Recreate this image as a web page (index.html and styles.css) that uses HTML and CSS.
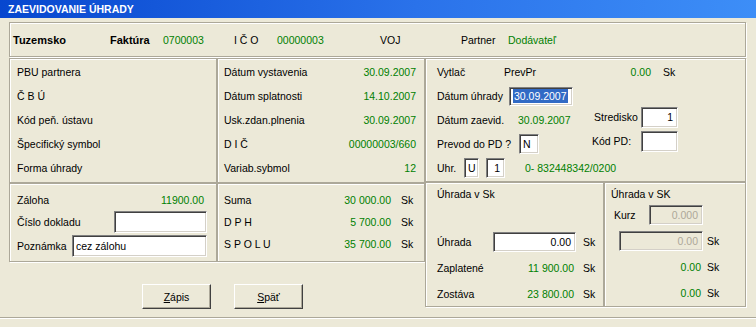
FILE: index.html
```html
<!DOCTYPE html>
<html lang="sk">
<head>
  <meta charset="UTF-8" />
  <title>Zaevidovanie úhrady</title>
  <link rel="stylesheet" href="styles.css">
</head>
<body>
<div class="window">
  <div class="titlebar">ZAEVIDOVANIE ÚHRADY</div>

  <div class="content">
    <div class="panel head">
      <span class="b">Tuzemsko</span>
      <span class="b">Faktúra</span>
      <span class="g">0700003</span>
      <span>I Č O</span>
      <span class="g">00000003</span>
      <span>VOJ</span>
      <span>Partner</span>
      <span class="g">Dodávateľ</span>
    </div>

    <div class="main">
      <div class="leftpart">
        <div class="upper">
          <div class="panel box list">
            <div class="f">PBU partnera</div>
            <div class="f">Č B Ú</div>
            <div class="f">Kód peň. ústavu</div>
            <div class="f">Špecifický symbol</div>
            <div class="f">Forma úhrady</div>
          </div>
          <div class="panel box list dates">
            <div class="f"><span>Dátum vystavenia</span><span class="g">30.09.2007</span></div>
            <div class="f"><span>Dátum splatnosti</span><span class="g">14.10.2007</span></div>
            <div class="f"><span>Usk.zdan.plnenia</span><span class="g">30.09.2007</span></div>
            <div class="f"><span>D I Č</span><span class="g">00000003/660</span></div>
            <div class="f"><span>Variab.sybmol</span><span class="g">12</span></div>
          </div>
        </div>

        <div class="lower">
          <div class="panel box zaloha">
            <div class="r"><span>Záloha</span><span class="g val">11900.00</span></div>
            <div class="r"><span>Číslo dokladu</span><span class="inp w93"></span></div>
            <div class="r r3"><span>Poznámka</span><span class="inp w135 left">cez zálohu</span></div>
          </div>
          <div class="panel box sums">
            <div class="s"><span>Suma</span><span class="g">30 000.00</span><span>Sk</span></div>
            <div class="s"><span>D P H</span><span class="g">5 700.00</span><span>Sk</span></div>
            <div class="s"><span>S P O L U</span><span class="g">35 700.00</span><span>Sk</span></div>
          </div>
        </div>

        <div class="buttons">
          <button class="btn"><u>Z</u>ápis</button>
          <button class="btn"><u>S</u>päť</button>
        </div>
      </div>

      <div class="rightpart">
        <div class="panel vyt">
          <div class="vrow">
            <span class="c67">Vytlač</span>
            <span class="c117">PrevPr</span>
            <span class="g c30">0.00</span>
            <span class="sk12">Sk</span>
          </div>
          <div class="cols">
            <div class="lc">
              <div class="lr">
                <span class="c72">Dátum úhrady</span>
                <span class="inp w64 left"><span class="sel">30.09.2007</span></span>
              </div>
              <div class="lr">
                <span class="c81">Dátum zaevid.</span>
                <span class="g">30.09.2007</span>
              </div>
              <div class="lr">
                <span class="c82">Prevod do PD ?</span>
                <span class="inp w20 left">N</span>
              </div>
              <div class="lr">
                <span class="c27">Uhr.</span>
                <span class="inp w15 left">U</span>
                <span class="inp w19 ml7">1</span>
                <span class="g ml20">0- 832448342/0200</span>
              </div>
            </div>
            <div class="rc">
              <span class="pl2">Stredisko</span>
              <span class="inp w37 h21">1</span>
              <span>Kód PD:</span>
              <span class="inp w37 h21"></span>
            </div>
          </div>
        </div>

        <div class="uh">
          <div class="panel ubox">
            <div class="utitle">Úhrada v Sk</div>
            <div class="urow first">
              <span class="c56">Úhrada</span>
              <span class="inp w83">0.00</span>
              <span class="ml7">Sk</span>
            </div>
            <div class="urow">
              <span class="c56">Zaplatené</span>
              <span class="g c81 right">11 900.00</span>
              <span class="ml9">Sk</span>
            </div>
            <div class="urow">
              <span class="c56">Zostáva</span>
              <span class="g c81 right">23 800.00</span>
              <span class="ml9">Sk</span>
            </div>
          </div>
          <div class="panel cbox">
            <div class="utitle">Úhrada v SK</div>
            <div class="urow">
              <span class="kurz">Kurz</span>
              <span class="inp off w54">0.000</span>
            </div>
            <div class="urow mt7">
              <span class="inp off w84 ml8">0.00</span>
              <span class="ml4">Sk</span>
            </div>
            <div class="urow">
              <span class="g c90 right">0.00</span>
              <span class="ml6">Sk</span>
            </div>
            <div class="urow">
              <span class="g c90 right">0.00</span>
              <span class="ml6">Sk</span>
            </div>
          </div>
        </div>
      </div>
    </div>
  </div>

  <div class="bottom"></div>
</div>
</body>
</html>
```

FILE: styles.css
```css
* {
  box-sizing: border-box;
}
body {
  margin: 0;
  background-color: #ece9d8;
  font-family: "Liberation Sans", Arial, sans-serif;
  font-size: 10.5px;
  color: #000;
}

.window {
  width: 756px;
  height: 327px;
  overflow: hidden;
}

.titlebar {
  height: 18px;
  line-height: 18px;
  padding-left: 8px;
  color: #fff;
  font-weight: bold;
  background: linear-gradient(to right, #0747cf, #2a72ea 55%, #3d8ef7);
}

.content {
  padding: 4px 0 0 9px;
}

/* etched frame */
.panel {
  border: 1px solid #aca899;
  box-shadow: inset 1px 1px 0 #fff, 1px 1px 0 #fff;
}

.g {
  color: #008000;
}
.b {
  font-weight: bold;
  font-size: 11px;
}

.head {
  width: 737px;
  height: 35px;
  display: grid;
  grid-template-columns: 97px 53px 71px 43px 103px 81px 47px auto;
  align-items: center;
  padding-left: 3px;
}

.main {
  display: flex;
  margin-top: 1px;
}

.leftpart {
  width: 416px;
}
.upper, .lower {
  display: flex;
}
.upper {
  height: 125px;
}
.lower {
  height: 79px;
}
.box {
  width: 208px;
}

.list {
  padding: 1px 0 0 7px;
}
.list .f {
  height: 24px;
  display: flex;
  align-items: center;
}
.dates {
  padding: 1px 8px 0 6px;
}
.dates .f {
  justify-content: space-between;
}

.zaloha {
  padding: 5px 9px 0 7px;
}
.zaloha .r {
  height: 22px;
  display: flex;
  align-items: center;
  justify-content: space-between;
}
.zaloha .r3 {
  margin-top: 2px;
}
.zaloha .val {
  margin-right: 3px;
}

.sums {
  padding: 5px 0 0 6px;
}
.sums .s {
  height: 22px;
  display: grid;
  grid-template-columns: 1fr auto 23px;
  align-items: center;
}
.sums .s .g {
  margin-right: 10px;
}

.buttons {
  display: flex;
  gap: 23px;
  padding-left: 133px;
  margin-top: 22px;
}
.btn {
  width: 69px;
  height: 25px;
  padding: 0;
  font-family: inherit;
  font-size: 10.5px;
  color: #000;
  background-color: #ece9d8;
  border: 1px solid;
  border-color: #fff #404040 #404040 #fff;
  box-shadow: inset -1px -1px 0 #aca899;
}

/* sunken field */
.inp {
  display: inline-flex;
  align-items: center;
  justify-content: flex-end;
  height: 20px;
  padding: 0 4px;
  background-color: #fff;
  border: 1px solid;
  border-color: #808080 #fff #fff #808080;
  box-shadow: inset 1px 1px 0 #404040, inset -1px -1px 0 #d4d0c8;
}
.inp.left {
  justify-content: flex-start;
  padding-left: 3px;
}
.inp.off {
  background-color: #ece9d8;
  color: #aca899;
}
.sel {
  background-color: #316ac5;
  color: #fff;
  padding: 1px 1px;
}

.w15 { width: 15px; }
.w19 { width: 19px; }
.w20 { width: 20px; }
.w37 { width: 37px; }
.w54 { width: 54px; }
.w64 { width: 64px; height: 19px; }
.w83 { width: 83px; }
.w84 { width: 84px; }
.w93 { width: 93px; height: 22px; }
.w135 { width: 135px; height: 22px; }
.h21 { height: 21px; }

.rightpart {
  width: 321px;
}
.vyt {
  height: 124px;
  padding: 1px 0 0 11px;
}
.vrow {
  height: 24px;
  display: flex;
  align-items: center;
}
.c27 { width: 27px; }
.c30 { width: 30px; }
.c56 { width: 56px; }
.c67 { width: 67px; }
.c72 { width: 72px; }
.c81 { width: 81px; }
.c82 { width: 82px; }
.c90 { width: 90px; }
.c117 { width: 117px; }
.c30, .right {
  text-align: right;
}
.sk12 { margin-left: 12px; }
.ml4 { margin-left: 4px; }
.ml6 { margin-left: 6px; }
.ml7 { margin-left: 7px; }
.ml8 { margin-left: 8px; }
.ml9 { margin-left: 9px; }
.ml20 { margin-left: 20px; }
.mt7 { margin-top: 7px; }

.cols {
  display: flex;
}
.lc {
  width: 155px;
  flex-shrink: 0;
}
.lr {
  height: 24px;
  display: flex;
  align-items: center;
  white-space: nowrap;
}
.lr > span,
.vrow > span,
.urow > span {
  flex-shrink: 0;
}
.rc {
  padding-top: 22px;
  display: grid;
  grid-template-columns: 49px 37px;
  grid-auto-rows: 22px;
  row-gap: 2px;
  align-items: center;
}
.pl2 {
  padding-left: 2px;
}

.uh {
  display: flex;
  height: 125px;
}
.ubox {
  width: 179px;
  padding-left: 11px;
}
.cbox {
  width: 142px;
  padding-left: 6px;
}
.utitle {
  height: 22px;
  display: flex;
  align-items: center;
}
.urow {
  height: 20px;
  display: flex;
  align-items: center;
  margin-top: 6px;
}
.urow.first {
  margin-top: 27px;
}
.cbox .urow:nth-child(2) {
  margin-top: 0;
}
.kurz {
  width: 35px;
  margin-left: 3px;
}

.bottom {
  margin-top: 8px;
  border-top: 1px solid #aca899;
  border-bottom: 1px solid #fff;
}
```
